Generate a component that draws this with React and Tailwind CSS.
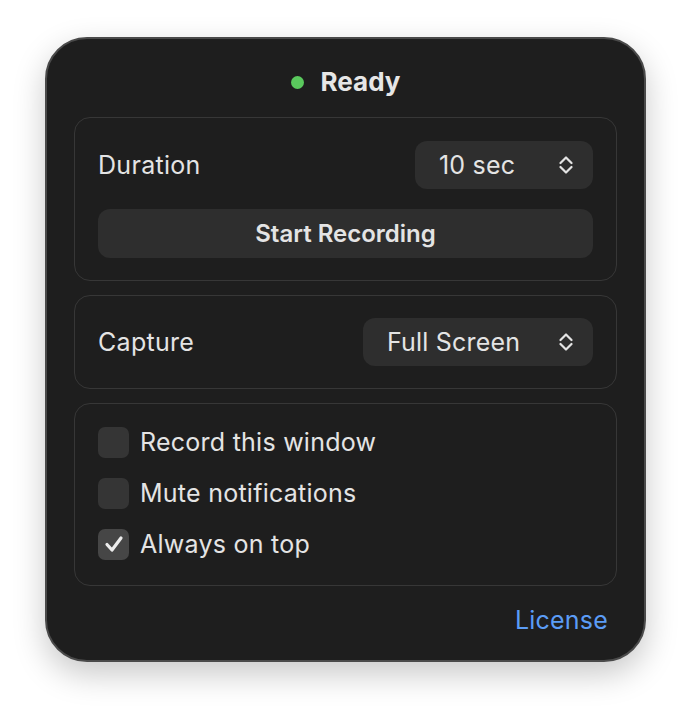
import React from "react";

const font = { fontFamily: "Inter, 'Noto Sans', sans-serif" };

function Chevrons() {
	return (
		<svg width="14" height="18" viewBox="0 0 14 18" fill="none" stroke="#e4e4e4" strokeWidth="2.2" strokeLinecap="round" strokeLinejoin="round">
			<polyline points="1.5,7 7,1.5 12.5,7" />
			<polyline points="1.5,11 7,16.5 12.5,11" />
		</svg>
	);
}

function Popup({ label, width }) {
	return (
		<div className={`${width} h-[48px] rounded-[12px] bg-[#2e2e2e] flex items-center justify-between pl-[24px] pr-[20px]`}>
			<span className="text-[25px] leading-[30px] tracking-[0.2px] text-[#e4e4e4]">{label}</span>
			<Chevrons />
		</div>
	);
}

function Checkbox({ label, checked }) {
	return (
		<div className="flex items-center h-[32px]">
			<div className={`w-[31px] h-[31px] rounded-[7px] flex items-center justify-center ${checked ? "bg-[#464646]" : "bg-[#353535]"}`}>
				{checked && (
					<svg width="20" height="18" viewBox="0 0 20 18" fill="none" stroke="#ececec" strokeWidth="3.2" strokeLinecap="round" strokeLinejoin="round">
						<polyline points="3,9.5 8,15 17,3" />
					</svg>
				)}
			</div>
			<span className="ml-[11px] text-[25px] leading-[30px] tracking-[0.25px] text-[#e4e4e4]">{label}</span>
		</div>
	);
}

export default function App() {
	return (
		<div className="min-h-[716px] bg-white pl-[45px] pt-[37px]" style={font}>
			<div className="w-[601px] h-[625px] rounded-[42px] bg-[#1e1e1e] border-2 border-[#4a4a4a] shadow-[0_12px_32px_rgba(0,0,0,0.22)] px-[27px] flex flex-col">
				<div className="h-[78px] pt-[8px] flex items-center justify-center gap-[17px]">
					<span className="w-[13px] h-[13px] rounded-full bg-[#5ac95d]" />
					<span className="text-[26px] leading-[30px] font-bold text-[#e6e6e6]">Ready</span>
				</div>

				<div className="rounded-[16px] border border-[#373737] px-[23px] pt-[23px] pb-[22px] flex flex-col gap-[20px]">
					<div className="flex items-center justify-between">
						<span className="text-[25px] leading-[30px] tracking-[0.3px] text-[#e4e4e4]">Duration</span>
						<Popup label="10 sec" width="w-[178px]" />
					</div>
					<button className="h-[49px] rounded-[12px] bg-[#2e2e2e] text-[24px] leading-[30px] font-semibold text-[#e4e4e4]">
						Start Recording
					</button>
				</div>

				<div className="mt-[14px] rounded-[16px] border border-[#373737] px-[23px] py-[22px] flex items-center justify-between">
					<span className="text-[25px] leading-[30px] tracking-[0.3px] text-[#e4e4e4]">Capture</span>
					<Popup label="Full Screen" width="w-[230px]" />
				</div>

				<div className="mt-[14px] rounded-[16px] border border-[#373737] px-[23px] pt-[22px] pb-[25px] flex flex-col gap-[19px]">
					<Checkbox label="Record this window" />
					<Checkbox label="Mute notifications" />
					<Checkbox label="Always on top" checked />
				</div>

				<div className="mt-[19px] pr-[9px] text-right">
					<span className="text-[25px] leading-[30px] tracking-[0.2px] text-[#5b9cf6]">License</span>
				</div>
			</div>
		</div>
	);
}
